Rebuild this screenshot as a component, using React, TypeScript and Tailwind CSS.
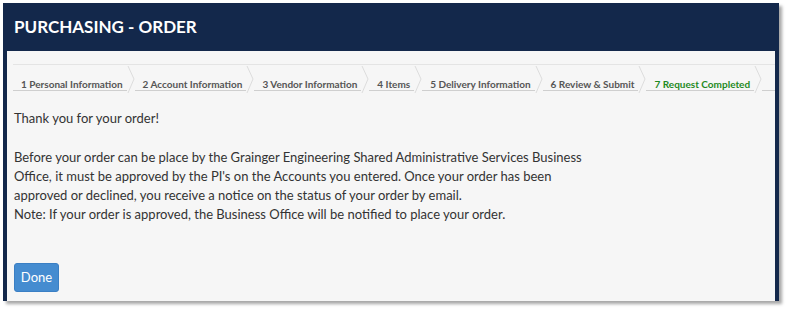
import React from "react";

const steps = [
  "1 Personal Information",
  "2 Account Information",
  "3 Vendor Information",
  "4 Items",
  "5 Delivery Information",
  "6 Review & Submit",
  "7 Request Completed",
];

const Chevron: React.FC = () => (
  <svg width="8" height="27" viewBox="0 0 8 27" className="shrink-0">
    <polyline points="1,0 7,13 1,27" fill="none" stroke="#dcdcdc" strokeWidth="1" />
  </svg>
);

const App: React.FC = () => {
  return (
    <div className="bg-white p-[3px] font-['Lato',sans-serif]">
      <div className="w-[776px] bg-[#13284b] shadow-[3px_3px_3px_rgba(0,0,0,0.35)]">
        <div className="flex h-[48px] items-center px-[11px]">
          <h1 className="text-[17px] font-bold text-white">PURCHASING - ORDER</h1>
        </div>
        <div className="mx-[4px] mb-[4px] h-[250px] bg-[#f6f6f6] pl-[6px] pt-[13px]">
          <div className="flex items-start border-t border-[#e4e4e4] pt-[1px]">
            {steps.map((s, i) => (
              <React.Fragment key={s}>
                <div className="flex h-[25px] shrink-0 items-end whitespace-nowrap border-b border-[#cfcfcf] pl-[8px] pr-[4px]">
                  <span
                    className={
                      i === steps.length - 1
                        ? "text-[10px] leading-[12px] font-bold text-[#1f8a23]"
                        : "text-[10px] leading-[12px] font-bold text-[#555555]"
                    }
                  >
                    {s}
                  </span>
                </div>
                <Chevron />
              </React.Fragment>
            ))}
            <div className="h-[25px] flex-1 border-b border-[#cfcfcf]" />
          </div>
          <div className="pl-[1px] text-[13px] leading-[19px] text-[#333333]">
            <p className="mt-[16px]">Thank you for your order!</p>
            <p className="mt-[20px]">
              Before your order can be place by the Grainger Engineering Shared Administrative Services Business
              <br />
              Office, it must be approved by the PI's on the Accounts you entered. Once your order has been
              <br />
              approved or declined, you receive a notice on the status of your order by email.
              <br />
              Note: If your order is approved, the Business Office will be notified to place your order.
            </p>
            <button className="mt-[39px] h-[29px] w-[45px] rounded-[3px] border border-[#3a7fc4] bg-[#458cd0] text-[13px] text-white">
              Done
            </button>
          </div>
        </div>
      </div>
    </div>
  );
};

export default App;
